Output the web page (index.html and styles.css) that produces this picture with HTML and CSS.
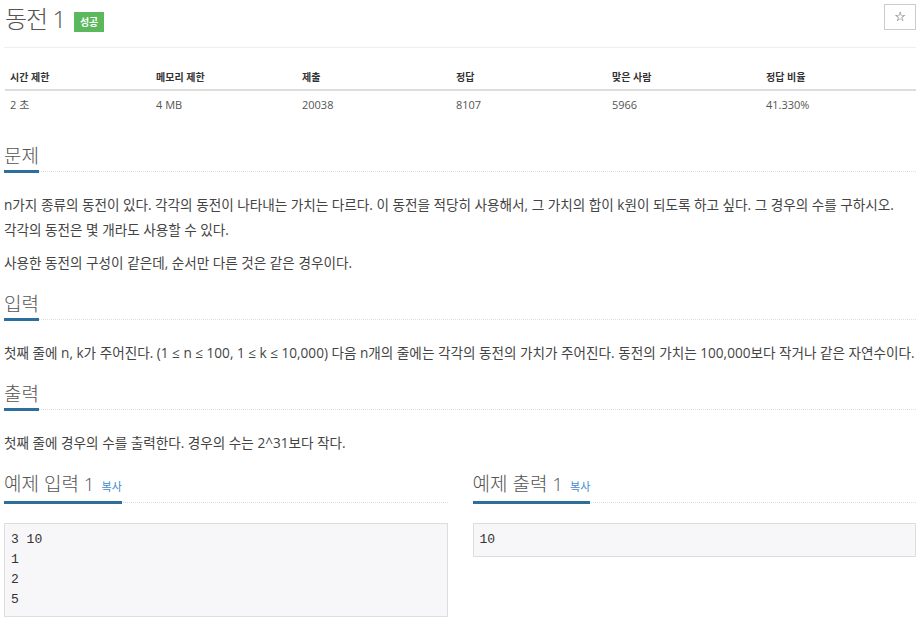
FILE: index.html
```html
<!DOCTYPE html>
<html lang="ko">
<head>
<meta charset="utf-8">
<title>동전 1</title>
<link rel="stylesheet" href="styles.css">
</head>
<body>
<div class="page">
  <div class="title-row">
    <h1 class="title">동전 1 <span class="badge">성공</span></h1>
    <button class="star-btn" type="button" aria-label="즐겨찾기">☆</button>
  </div>

  <table class="info">
    <colgroup>
      <col class="c1"><col class="c2"><col class="c3"><col class="c4"><col class="c5"><col class="c6">
    </colgroup>
    <thead>
      <tr><th>시간 제한</th><th>메모리 제한</th><th>제출</th><th>정답</th><th>맞은 사람</th><th>정답 비율</th></tr>
    </thead>
    <tbody>
      <tr><td>2 초</td><td>4 MB</td><td>20038</td><td>8107</td><td>5966</td><td>41.330%</td></tr>
    </tbody>
  </table>

  <div class="sections">
    <section class="section">
      <div class="headline"><h2>문제</h2></div>
      <div class="body">
        <p>n가지 종류의 동전이 있다. 각각의 동전이 나타내는 가치는 다르다. 이 동전을 적당히 사용해서, 그 가치의 합이 k원이 되도록 하고 싶다. 그 경우의 수를 구하시오.<br>각각의 동전은 몇 개라도 사용할 수 있다.</p>
        <p>사용한 동전의 구성이 같은데, 순서만 다른 것은 같은 경우이다.</p>
      </div>
    </section>

    <section class="section">
      <div class="headline"><h2>입력</h2></div>
      <div class="body">
        <p>첫째 줄에 n, k가 주어진다. (1 ≤ n ≤ 100, 1 ≤ k ≤ 10,000) 다음 n개의 줄에는 각각의 동전의 가치가 주어진다. 동전의 가치는 100,000보다 작거나 같은 자연수이다.</p>
      </div>
    </section>

    <section class="section">
      <div class="headline"><h2>출력</h2></div>
      <div class="body">
        <p>첫째 줄에 경우의 수를 출력한다. 경우의 수는 2^31보다 작다.</p>
      </div>
    </section>

    <div class="samples">
      <section class="section">
        <div class="headline"><h2>예제 입력 1 <a class="copy" href="#">복사</a></h2></div>
        <pre class="sample">3 10
1
2
5</pre>
      </section>
      <section class="section">
        <div class="headline"><h2>예제 출력 1 <a class="copy" href="#">복사</a></h2></div>
        <pre class="sample">10</pre>
      </section>
    </div>
  </div>
</div>
</body>
</html>
```

FILE: styles.css
```css
html, body {
  margin: 0;
  padding: 0;
  background: #fff;
}

body {
  font-family: "Open Sans", "Noto Sans CJK KR", sans-serif;
  color: #444;
}

.page {
  width: 912px;
  margin: 0 6px 0 4px;
}

.title-row {
  display: flex;
  justify-content: space-between;
  align-items: flex-start;
  padding: 4px 0 0 1px;
  height: 43px;
  border-bottom: 1px solid #eee;
}

.title {
  margin: 0;
  font-size: 24px;
  line-height: 30px;
  font-weight: 300;
  color: #555;
  display: flex;
  align-items: flex-start;
  letter-spacing: -1px;
}

.badge {
  display: inline-block;
  margin: 8px 0 0 9px;
  width: 30px;
  height: 20px;
  line-height: 20px;
  text-align: center;
  background: #5cb85c;
  color: #fff;
  font-size: 10px;
  font-weight: bold;
  letter-spacing: 0;
}

.star-btn {
  width: 32px;
  height: 26px;
  padding: 0;
  border: 1px solid #ccc;
  background: #fff;
  color: #333;
  font-size: 13px;
  line-height: 24px;
  font-family: "DejaVu Sans", sans-serif;
  cursor: pointer;
}

.info {
  width: 911px;
  margin: 13px 0 0 1px;
  border-collapse: collapse;
  table-layout: fixed;
  font-size: 11px;
  line-height: 17px;
}

.c1 { width: 146px; }
.c2 { width: 146px; }
.c3 { width: 154px; }
.c4 { width: 156px; }
.c5 { width: 154px; }
.c6 { width: 155px; }

.info th {
  text-align: left;
  font-size: 10px;
  font-weight: bold;
  color: #333;
  padding: 8px 5px 3px;
  border-bottom: 2px solid #ddd;
}

.info td {
  padding: 5px 5px;
  color: #555;
}

.sections {
  display: flex;
  flex-direction: column;
  gap: 17px;
  margin-top: 26px;
}

.section {
  margin: 0;
}

.headline {
  border-bottom: 1px dotted #ddd;
  display: flex;
  margin-bottom: 20px;
}

.headline h2 {
  margin: 0 0 -2px 0;
  font-size: 19px;
  line-height: 24px;
  font-weight: 300;
  color: #555;
  padding-bottom: 2px;
  border-bottom: 3px solid #2c6f9c;
}

.copy {
  font-size: 11px;
  font-weight: normal;
  color: #428bca;
  text-decoration: none;
  margin-left: 2px;
}

.body p {
  margin: 0 0 8px;
  font-size: 13.6px;
  line-height: 25px;
}

.body p:last-child {
  margin-bottom: 0;
}

.samples {
  display: grid;
  grid-template-columns: 1fr 1fr;
  column-gap: 25px;
}

.sample {
  margin: 0;
  padding: 6px 6px;
  background: #f7f7f9;
  border: 1px solid #ddd;
  font-family: "Liberation Mono", monospace;
  font-size: 13px;
  line-height: 20px;
  color: #333;
}
```
